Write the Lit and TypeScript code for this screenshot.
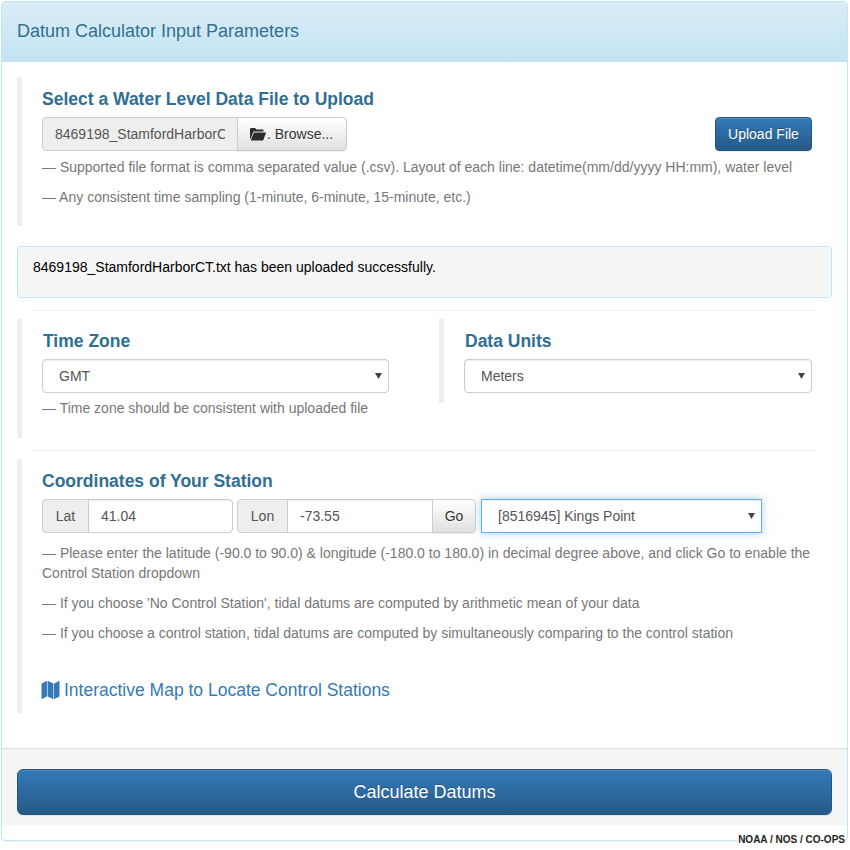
import { LitElement, html, css } from "lit";
import { customElement } from "lit/decorators.js";

@customElement("app-root")
export class AppRoot extends LitElement {
  static styles = css`
    :host { display: block; width: 850px; height: 850px; position: relative; background: #fff; overflow: hidden;
      font-family: "Liberation Sans", Arial, sans-serif; font-size: 14px; line-height: 20px; color: #333; }
    * { box-sizing: border-box; }
    .panel { margin: 1px 0 0 1px; width: 847px; border: 1px solid #bce8f1; border-radius: 4px; background: #fff;
      box-shadow: 0 1px 1px rgba(0,0,0,.05); }
    .heading { height: 60px; padding: 0 15px 2px; display: flex; align-items: center; font-size: 18px; color: #31708f;
      background: linear-gradient(to bottom, #d9edf7, #c4e3f3); border-radius: 3px 3px 0 0; }
    .body { padding: 15px 15px 35px; }
    .well { border-left: 5px solid #eee; padding: 12px 20px 10px; }
    .title { margin: 0 0 8px; font-size: 17.5px; line-height: 20px; font-weight: bold; color: #2e6f93; }
    p { margin: 0 0 10px; color: #777; }
    .w1 { height: 149px; }
    .row { display: flex; align-items: center; height: 34px; margin-bottom: 6px; }
    .row.spread { justify-content: space-between; }
    .group { display: flex; height: 34px; }
    input, select, button { font-family: inherit; font-size: 14px; }
    input { height: 34px; border: 1px solid #ccc; padding: 6px 12px; color: #555; background: #fff; outline: none;
      box-shadow: inset 0 1px 1px rgba(0,0,0,.075); }
    .file { width: 196px; background: #eee; border-radius: 4px 0 0 4px; box-shadow: none; }
    .btn { height: 34px; border: 1px solid #ccc; padding: 6px 12px; color: #333;
      background: linear-gradient(to bottom, #fff, #e0e0e0); text-shadow: 0 1px 0 #fff;
      box-shadow: inset 0 1px 0 rgba(255,255,255,.15), 0 1px 1px rgba(0,0,0,.075); }
    .browse { width: 110px; margin-left: -1px; border-radius: 0 4px 4px 0; display: flex; align-items: center; padding: 0 0 0 11px; white-space: nowrap; }
    .browse svg { width: 18px; height: 14px; flex: none; }
    .primary { color: #fff; border: 1px solid #245580; border-radius: 4px;
      background: linear-gradient(to bottom, #337ab7, #265a88); text-shadow: 0 -1px 0 rgba(0,0,0,.2);
      box-shadow: inset 0 1px 0 rgba(255,255,255,.15), 0 1px 1px rgba(0,0,0,.075); }
    .upload { width: 97px; height: 34px; padding: 0; }
    .alert { margin-top: 20px; border: 1px solid #bce8f1; border-radius: 4px; background: #f5f5f5; height: 52px;
      padding: 10px 15px; color: #000; }
    hr { height: 1px; border: 0; margin: 12px 15px 8px; background: #eee; }
    .cols { display: flex; align-items: flex-start; }
    .cols .title { margin-left: 1px; }
    .col1 { flex: 0 0 422px; padding-right: 50px; height: 119px; }
    .col2 { flex: 1; padding-right: 20px; height: 84px; }
    select { display: block; width: 100%; height: 34px; border: 1px solid #ccc; border-radius: 4px; padding: 6px 20px 6px 16px;
      color: #555; outline: none; box-shadow: inset 0 1px 1px rgba(0,0,0,.075); appearance: none; -webkit-appearance: none;
      background: #fff url("data:image/svg+xml,%3Csvg xmlns='http://www.w3.org/2000/svg' width='7' height='6'%3E%3Cpath fill='%23444' d='M0 0H7L3.5 6Z'/%3E%3C/svg%3E") no-repeat right 6px center; }
    .cols .row { margin-bottom: 5px; }
    .addon { height: 34px; display: flex; align-items: center; justify-content: center; background: #eee; border: 1px solid #ccc;
      color: #555; border-radius: 4px 0 0 4px; }
    .lat { width: 47px; }
    .lon { width: 51px; }
    .latin { width: 145px; margin-left: -1px; border-radius: 0 4px 4px 0; }
    .lonin { width: 146px; margin-left: -1px; }
    .go { width: 44px; margin-left: -1px; padding: 0; border-radius: 0 4px 4px 0; }
    .mr { margin-right: 4px; }
    .station { width: 281px; margin-left: 5px; border-radius: 0; border-color: #66afe9;
      box-shadow: inset 0 1px 1px rgba(0,0,0,.075), 0 0 8px rgba(102,175,233,.6); }
    .w3 { height: 254px; }
    .w3 .row { margin-bottom: 10px; }
    .link { display: flex; align-items: center; margin-top: 37px; margin-left: -1px; font-size: 17.5px; line-height: 20px; color: #337ab7; text-decoration: none; }
    .link svg { width: 19px; height: 18px; margin-right: 4px; fill: #337ab7; flex: none; }
    .footer { background: #f5f5f5; border-top: 1px solid #ddd; padding: 20px 15px 10px; margin-bottom: 15px; }
    .calc { display: block; width: 100%; height: 46px; font-size: 18px; line-height: 24px; padding: 0; border-radius: 6px; }
    .credit { position: absolute; right: 5px; top: 833px; font-size: 10px; line-height: 14px; font-weight: bold; color: #222; background: #fff; padding-left: 1px; }
  `;

  render() {
    return html`
      <div class="panel">
        <div class="heading">Datum Calculator Input Parameters</div>
        <div class="body">
          <div class="well w1">
            <h4 class="title">Select a Water Level Data File to Upload</h4>
            <div class="row spread">
              <div class="group">
                <input class="file" readonly .value=${"8469198_StamfordHarborCT.txt"} />
                <div class="btn browse">
                  <svg viewBox="0 0 17 14"><path fill="#2b2b2b" d="M0.5 2.2Q0.5 1 1.6 1H5.6L6.8 2.4H13Q14 2.4 14 3.4V4.6H4L1 12Q0.5 11.6 0.5 10.8ZM4.4 5.4H16.6L13.6 13.4H1.2Z"/></svg>
                  <span>. Browse...</span>
                </div>
              </div>
              <button class="primary upload">Upload File</button>
            </div>
            <p>— Supported file format is comma separated value (.csv). Layout of each line: datetime(mm/dd/yyyy HH:mm), water level</p>
            <p>— Any consistent time sampling (1-minute, 6-minute, 15-minute, etc.)</p>
          </div>

          <div class="alert">8469198_StamfordHarborCT.txt has been uploaded successfully.</div>
          <hr />

          <div class="cols">
            <div class="well col1">
              <h4 class="title">Time Zone</h4>
              <div class="row"><select><option>GMT</option></select></div>
              <p>— Time zone should be consistent with uploaded file</p>
            </div>
            <div class="well col2">
              <h4 class="title">Data Units</h4>
              <div class="row"><select><option>Meters</option></select></div>
            </div>
          </div>
          <hr />

          <div class="well w3">
            <h4 class="title">Coordinates of Your Station</h4>
            <div class="row">
              <div class="addon lat">Lat</div>
              <input class="latin mr" .value=${"41.04"} />
              <div class="addon lon">Lon</div>
              <input class="lonin" .value=${"-73.55"} />
              <button class="btn go">Go</button>
              <select class="station"><option>[8516945] Kings Point</option></select>
            </div>
            <p>— Please enter the latitude (-90.0 to 90.0) &amp; longitude (-180.0 to 180.0) in decimal degree above, and click Go to enable the Control Station dropdown</p>
            <p>— If you choose 'No Control Station', tidal datums are computed by arithmetic mean of your data</p>
            <p>— If you choose a control station, tidal datums are computed by simultaneously comparing to the control station</p>
            <a class="link" href="#">
              <svg viewBox="0 0 1792 1792"><path d="M512 0q13 0 22.5 9.5t9.5 22.5v1472q0 20-17 28l-480 256q-7 4-15 4-13 0-22.5-9.5t-9.5-22.5v-1472q0-20 17-28l480-256q7-4 15-4zm1248 0q13 0 22.5 9.5t9.5 22.5v1472q0 20-17 28l-480 256q-7 4-15 4-13 0-22.5-9.5t-9.5-22.5v-1472q0-20 17-28l480-256q7-4 15-4zm-1120 0q8 0 14 3l512 256q18 10 18 29v1472q0 13-9.5 22.5t-22.5 9.5q-8 0-14-3l-512-256q-18-10-18-29v-1472q0-13 9.5-22.5t22.5-9.5z"/></svg>
              <span>Interactive Map to Locate Control Stations</span>
            </a>
          </div>
        </div>
        <div class="footer"><button class="primary calc">Calculate Datums</button></div>
      </div>
      <div class="credit">NOAA / NOS / CO-OPS</div>
    `;
  }
}
